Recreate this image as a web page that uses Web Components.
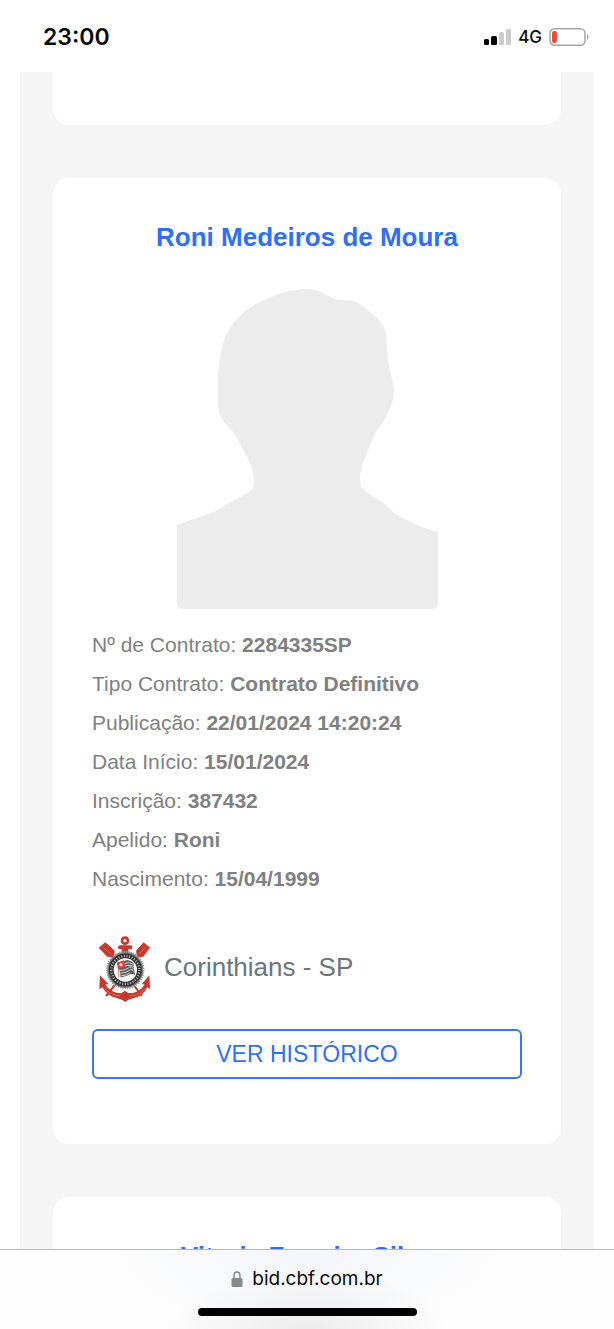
<!DOCTYPE html>
<html lang="pt-BR">
<head>
<meta charset="UTF-8">
<meta name="viewport" content="width=device-width, initial-scale=1">
<title>BID - CBF</title>
<style>
    html, body {
        height: 100%;
    }
    body {
        margin: 0;
        background: #fff;
        font-family: "Liberation Sans", Arial, sans-serif;
    }
</style>
</head>
<body>
<phone-screen>
    <status-bar slot="top" time="23:00" network="4G"></status-bar>

    <athlete-list>
        <athlete-card class="previous"></athlete-card>
        <athlete-card name="Roni Medeiros de Moura">
            <athlete-photo></athlete-photo>
            <athlete-data></athlete-data>
            <club-row>Corinthians - SP</club-row>
            <history-button>VER HISTÓRICO</history-button>
        </athlete-card>
        <athlete-card name="Vitoria Ferreira Silva"></athlete-card>
    </athlete-list>

    <address-bar slot="bottom" href="https://bid.cbf.com.br">bid.cbf.com.br</address-bar>
</phone-screen>

<script>
class PhoneScreen extends HTMLElement {
    connectedCallback() {
        this.attachShadow({ mode: 'open' });
        this.shadowRoot.innerHTML = `
            <style>
                :host {
                    display: flex;
                    flex-direction: column;
                    height: 100vh;
                }
                main {
                    flex: 1;
                    min-height: 0;
                    overflow: hidden;
                    padding: 0 20px;
                }
            </style>
            <slot name="top"></slot>
            <main><slot></slot></main>
            <slot name="bottom"></slot>
        `;
    }
}

class StatusBar extends HTMLElement {
    connectedCallback() {
        this.attachShadow({ mode: 'open' });
        this.shadowRoot.innerHTML = `
            <style>
                :host {
                    display: flex;
                    align-items: center;
                    justify-content: space-between;
                    box-sizing: border-box;
                    height: 72px;
                    padding: 2px 25px 0 43px;
                    font-family: Inter, sans-serif;
                    color: #0a0a0a;
                }
                .time {
                    font-size: 23px;
                    font-weight: 600;
                }
                .icons {
                    display: flex;
                    align-items: center;
                    gap: 7px;
                    font-size: 17px;
                    font-weight: 500;
                }
                svg {
                    display: block;
                }
            </style>
            <span class="time">${this.getAttribute('time')}</span>
            <div class="icons">
                <svg width="28" height="18" viewBox="0 0 28 18" aria-hidden="true">
                    <rect x="1" y="11" width="5" height="6" rx="1.5" fill="#000"/>
                    <rect x="8" y="8" width="6" height="9" rx="1.5" fill="#000"/>
                    <rect x="16" y="4" width="5" height="13" rx="1.5" fill="#cbcbcb"/>
                    <rect x="23" y="1" width="5" height="16" rx="1.5" fill="#cbcbcb"/>
                </svg>
                <span>${this.getAttribute('network')}</span>
                <svg width="40" height="18" viewBox="0 0 40 18" aria-hidden="true">
                    <rect x="1" y="0.8" width="35" height="16.4" rx="4.5" fill="none" stroke="#a6a6a6" stroke-width="1.5"/>
                    <rect x="3" y="3" width="5" height="12" rx="2" fill="#ee4b3a"/>
                    <path d="M38 6v6c2-1 2-5 0-6z" fill="#a6a6a6"/>
                </svg>
            </div>
        `;
    }
}

class AthleteList extends HTMLElement {
    connectedCallback() {
        this.attachShadow({ mode: 'open' });
        this.shadowRoot.innerHTML = `
            <style>
                :host {
                    display: flex;
                    flex-direction: column;
                    gap: 53px;
                    padding: 0 33px;
                    background: #f5f5f5;
                }
                ::slotted(.previous) {
                    border-radius: 0 0 16px 16px;
                    padding: 0;
                    height: 53px;
                }
            </style>
            <slot></slot>
        `;
    }
}

class AthleteCard extends HTMLElement {
    connectedCallback() {
        const name = this.getAttribute('name');
        this.attachShadow({ mode: 'open' });
        this.shadowRoot.innerHTML = `
            <style>
                :host {
                    display: block;
                    padding: 40px 39px 65px;
                    border-radius: 16px;
                    background: #fff;
                }
                h2 {
                    margin: 0 0 5px;
                    font-size: 26px;
                    line-height: 38px;
                    text-align: center;
                    color: #2f6ff5;
                }
            </style>
            ${name ? `<h2>${name}</h2>` : ''}
            <slot></slot>
        `;
    }
}

class AthletePhoto extends HTMLElement {
    connectedCallback() {
        this.attachShadow({ mode: 'open' });
        this.shadowRoot.innerHTML = `
            <style>
                :host {
                    display: flex;
                    justify-content: center;
                    margin-bottom: 16px;
                }
                svg {
                    display: block;
                    width: 261px;
                    max-width: 100%;
                    border-radius: 6px;
                }
            </style>
            <svg viewBox="0 0 261 348" role="img" aria-label="Sem foto">
                <path fill="#ececec" d="M0 264L17 258L37 251C42 249 48 244 54 241L72 231Q77 228 77 219C77 210 73 203 70 196L60 177C55 168 50 166 45 158Q41 151 41 144V122Q41 104 45 86Q47 76 52 69Q57 60 67 51Q79 42 94 36Q110 29 127 28Q137 28 142 30C148 32 152 36 159 38C167 40 174 38 182 42Q191 49 199 56Q208 64 209 73L211 99C212 109 215 114 216 122Q218 132 215 142Q211 153 206 161L198 172Q194 182 190 192Q185 202 184 210Q182 219 184 226Q193 235 202 239Q210 244 217 252Q224 257 234 261Q246 267 261 271V348H0Z"/>
            </svg>
        `;
    }
}

class AthleteData extends HTMLElement {
    connectedCallback() {
        this.attachShadow({ mode: 'open' });

        this.fields = [
            { label: 'Nº de Contrato', value: '2284335SP' },
            { label: 'Tipo Contrato', value: 'Contrato Definitivo' },
            { label: 'Publicação', value: '22/01/2024 14:20:24' },
            { label: 'Data Início', value: '15/01/2024' },
            { label: 'Inscrição', value: '387432' },
            { label: 'Apelido', value: 'Roni' },
            { label: 'Nascimento', value: '15/04/1999' }
        ];

        this.render();
    }

    render() {
        this.shadowRoot.innerHTML = `
            <style>
                :host {
                    display: block;
                    margin-bottom: 38px;
                    font-size: 21px;
                    line-height: 39px;
                    color: #808080;
                }
                dl {
                    margin: 0;
                }
                dt, dd {
                    display: inline;
                    margin: 0;
                }
                dd {
                    font-weight: bold;
                }
            </style>
            <dl>
                ${this.fields.map(field => `
                    <div><dt>${field.label}:</dt> <dd>${field.value}</dd></div>
                `).join('')}
            </dl>
        `;
    }
}

class ClubRow extends HTMLElement {
    connectedCallback() {
        this.attachShadow({ mode: 'open' });
        this.shadowRoot.innerHTML = `
            <style>
                :host {
                    display: flex;
                    align-items: center;
                    gap: 14px;
                    margin-bottom: 27px;
                    padding-left: 6px;
                    font-size: 26px;
                    line-height: 30px;
                    color: #6c757d;
                }
                svg {
                    flex: none;
                    width: 52px;
                    height: 66px;
                }
                span {
                    padding-bottom: 4px;
                }
            </style>
            <svg viewBox="10 14 156 198" aria-hidden="true">
                <!-- oars -->
                <path d="M42 60L142 194M142 60L34 194" stroke="#c5382c" stroke-width="6"/>
                <path fill="#c5382c" d="M12 49L32 33L60 58L58 78L38 76Z"/>
                <path fill="#c5382c" d="M166 49L147 33L124 58L127 78L146 76Z"/>
                <path d="M26 48L48 68M152 48L134 68" stroke="#e58a80" stroke-width="2"/>
                <!-- anchor -->
                <circle cx="91" cy="28" r="9" fill="none" stroke="#c5382c" stroke-width="8"/>
                <rect x="70" y="42" width="43" height="12" rx="6" fill="#c5382c"/>
                <path d="M83 46H100L102 72H81Z" fill="#c5382c"/>
                <path fill="#c5382c" d="M16 132L41 158L32 160Q48 184 80 186L91 178L102 186Q136 184 150 160L142 158L164 132L166 173L158 168Q146 196 111 202Q101 203 92 212Q82 203 72 202Q38 196 23 168L14 174Z"/>
                <path d="M30 170Q45 192 78 194M152 170Q140 191 105 194" fill="none" stroke="#e58a80" stroke-width="2"/>
                <!-- ring -->
                <circle cx="92" cy="116" r="54" fill="#777"/>
                <circle cx="92" cy="116" r="55" fill="none" stroke="#9a9a9a" stroke-width="5" stroke-dasharray="4 3"/>
                <circle cx="92" cy="116" r="42" fill="none" stroke="#333" stroke-width="15"/>
                <circle cx="92" cy="116" r="42" fill="none" stroke="#bcbcbc" stroke-width="7" stroke-dasharray="3 5"/>
                <circle cx="92" cy="116" r="35" fill="#fff"/>
                <!-- flag -->
                <path d="M68 94L98 86Q105 87 116 94L121 130Q110 125 101 132L78 139L75 118Z" fill="#606060"/>
                <path d="M90 96Q106 91 116 99M91 104Q108 99 118 107M75 118Q95 116 102 109T119 115M77 126Q97 124 104 117T120 123M78 134Q98 132 105 125" fill="none" stroke="#d2d2d2" stroke-width="3"/>
                <path d="M66 94L88 87L92 106L71 113Z" fill="#dc4436"/>
                <circle cx="79" cy="100" r="5" fill="#f5d2ce"/>
                <path d="M70 94L73 139" stroke="#c5382c" stroke-width="2"/>
            </svg>
            <span><slot></slot></span>
        `;
    }
}

class HistoryButton extends HTMLElement {
    connectedCallback() {
        this.attachShadow({ mode: 'open' });
        this.shadowRoot.innerHTML = `
            <style>
                :host {
                    display: block;
                }
                button {
                    display: block;
                    box-sizing: border-box;
                    width: 100%;
                    height: 50px;
                    padding: 0;
                    border: 2px solid #3975f4;
                    border-radius: 6px;
                    background: #fff;
                    font: 23px "Liberation Sans", Arial, sans-serif;
                    color: #2f6ff5;
                    cursor: pointer;
                }
            </style>
            <button type="button"><slot></slot></button>
        `;
    }
}

class AddressBar extends HTMLElement {
    connectedCallback() {
        this.attachShadow({ mode: 'open' });
        this.shadowRoot.innerHTML = `
            <style>
                :host {
                    display: flex;
                    flex-direction: column;
                    align-items: center;
                    justify-content: space-between;
                    box-sizing: border-box;
                    height: 80px;
                    padding: 17px 0 13px;
                    border-top: 1px solid #b8b8b8;
                    background:
                        radial-gradient(ellipse 140px 60px at 50% 100%, #ececec, rgba(236, 236, 236, 0)),
                        radial-gradient(ellipse 190px 80px at 50% 0, #f4f6fc, rgba(244, 246, 252, 0)),
                        #fdfdfd;
                }
                a {
                    display: flex;
                    align-items: center;
                    gap: 9px;
                    font: 19px/24px Inter, sans-serif;
                    color: #0a0a0a;
                    text-decoration: none;
                }
                .home {
                    width: 219px;
                    height: 8px;
                    border-radius: 4px;
                    background: #000;
                }
            </style>
            <a href="${this.getAttribute('href')}">
                <svg width="12" height="16" viewBox="0 0 12 16" aria-hidden="true">
                    <path d="M3 8V4.5a3 3.5 0 0 1 6 0V8" fill="none" stroke="#8a8a8e" stroke-width="1.5"/>
                    <rect x="0.5" y="7" width="11" height="9" rx="1.5" fill="#8a8a8e"/>
                </svg>
                <slot></slot>
            </a>
            <div class="home"></div>
        `;
    }
}

customElements.define('phone-screen', PhoneScreen);
customElements.define('status-bar', StatusBar);
customElements.define('athlete-list', AthleteList);
customElements.define('athlete-card', AthleteCard);
customElements.define('athlete-photo', AthletePhoto);
customElements.define('athlete-data', AthleteData);
customElements.define('club-row', ClubRow);
customElements.define('history-button', HistoryButton);
customElements.define('address-bar', AddressBar);
</script>
</body>
</html>
